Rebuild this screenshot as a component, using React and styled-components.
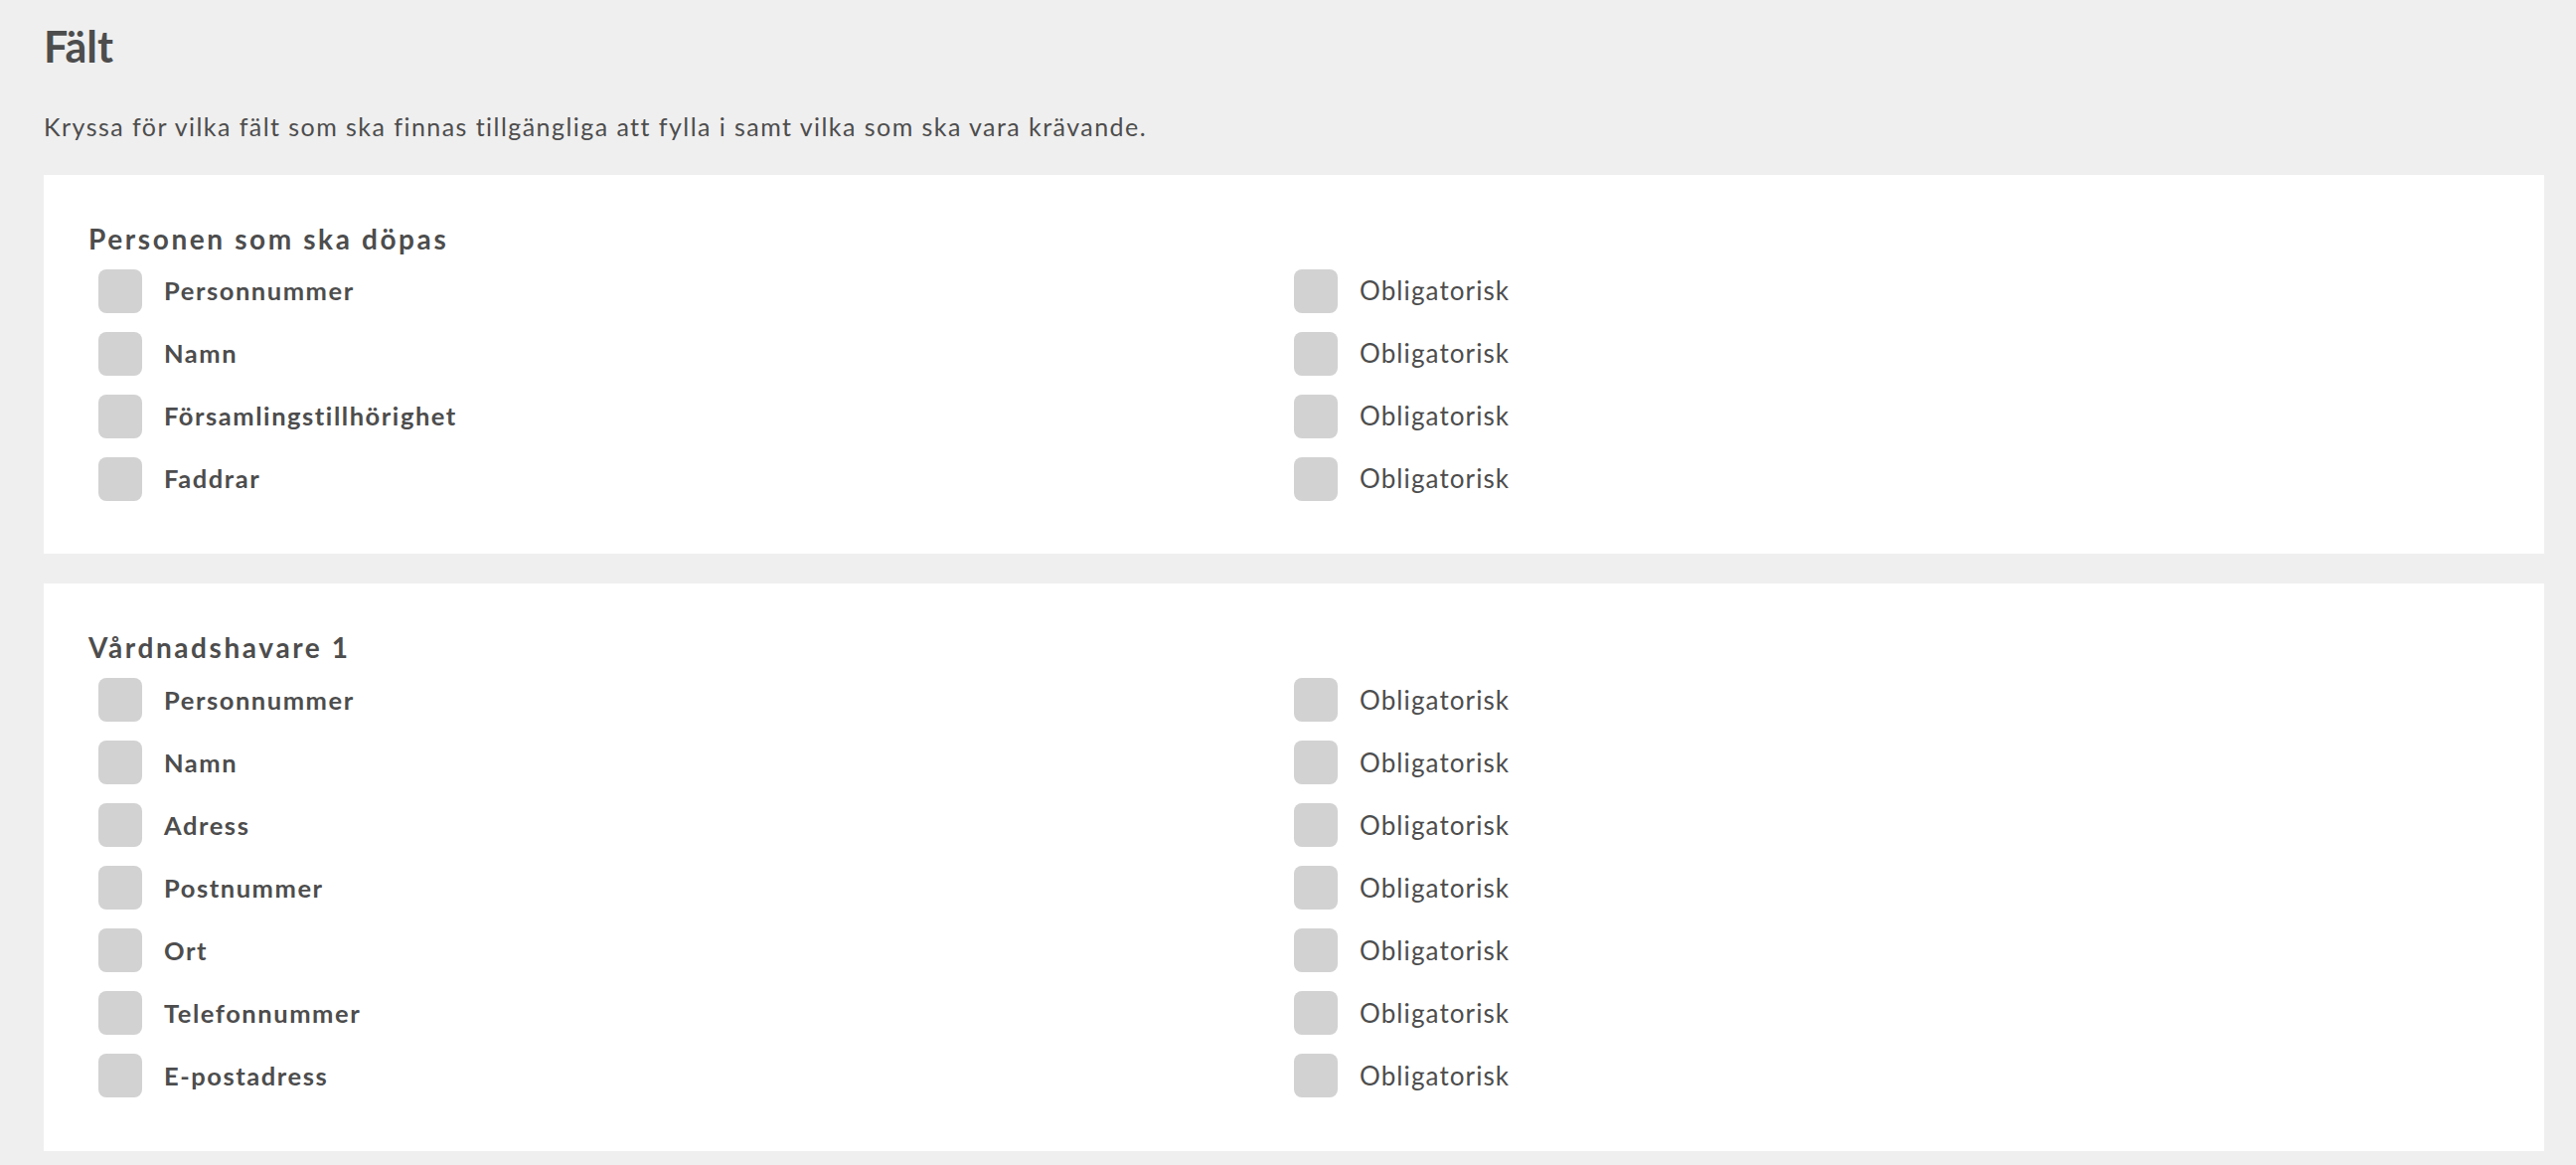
import React from "react";
import styled, { createGlobalStyle } from "styled-components";

const GlobalStyle = createGlobalStyle`
  html, body {
    margin: 0;
    padding: 0;
    background: #efefef;
  }
  body {
    font-family: Lato, "Open Sans", "Liberation Sans", sans-serif;
    color: #4d4d4d;
  }
  * { box-sizing: border-box; }
`;

const Page = styled.div`
  display: flex;
  flex-direction: column;
  padding: 21px 32px 14px 44px;
`;

const Title = styled.h1`
  margin: 0;
  font-size: 43px;
  line-height: 1.2;
  font-weight: 700;
  color: #4d4d4d;
`;

const Intro = styled.p`
  margin: 39px 0 34px;
  font-size: 25px;
  line-height: 1.2;
  font-weight: 400;
  letter-spacing: 1.45px;
  color: #4d4d4d;
`;

const Cards = styled.div`
  display: flex;
  flex-direction: column;
  gap: 30px;
`;

const Card = styled.section`
  background: #ffffff;
  padding: 48px 45px 44px;
`;

const SectionTitle = styled.h2`
  margin: 0 0 4px;
  font-size: 28px;
  line-height: 1.2;
  font-weight: 700;
  letter-spacing: 2.6px;
  color: #4d4d4d;
`;

const Row = styled.div`
  display: grid;
  grid-template-columns: 1fr 1fr;
  padding-right: 20px;
  height: 63px;
  align-items: center;
`;

const Option = styled.label`
  display: flex;
  align-items: center;
  gap: 22px;
  padding-left: 10px;
  cursor: pointer;
`;

const Box = styled.span`
  width: 44px;
  height: 44px;
  border-radius: 8px;
  background: #d2d2d2;
  flex: none;
`;

const OptionText = styled.span`
  font-size: ${(p) => (p.$bold ? "25.5px" : "26px")};
  line-height: 1.2;
  font-weight: ${(p) => (p.$bold ? 700 : 400)};
  letter-spacing: ${(p) => (p.$bold ? "1.55px" : "1.1px")};
  color: #4d4d4d;
`;

const sections = [
  {
    title: "Personen som ska döpas",
    fields: ["Personnummer", "Namn", "Församlingstillhörighet", "Faddrar"],
  },
  {
    title: "Vårdnadshavare 1",
    fields: [
      "Personnummer",
      "Namn",
      "Adress",
      "Postnummer",
      "Ort",
      "Telefonnummer",
      "E-postadress",
    ],
  },
];

export default function App() {
  return (
    <>
      <GlobalStyle />
      <Page>
        <Title>Fält</Title>
        <Intro>
          Kryssa för vilka fält som ska finnas tillgängliga att fylla i samt vilka som ska vara krävande.
        </Intro>
        <Cards>
          {sections.map((s) => (
            <Card key={s.title}>
              <SectionTitle>{s.title}</SectionTitle>
              {s.fields.map((f) => (
                <Row key={f}>
                  <Option>
                    <Box />
                    <OptionText $bold>{f}</OptionText>
                  </Option>
                  <Option>
                    <Box />
                    <OptionText>Obligatorisk</OptionText>
                  </Option>
                </Row>
              ))}
            </Card>
          ))}
        </Cards>
      </Page>
    </>
  );
}
